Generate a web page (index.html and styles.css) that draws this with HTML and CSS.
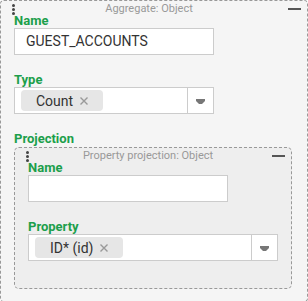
FILE: index.html
```html
<!DOCTYPE html>
<html>
<head>
    <title>Aggregate</title>
    <link rel="stylesheet" href="styles.css">
</head>
<body>
    <div class="box box-outer">
        <div class="box-head">
            <div class="handle"><span></span><span></span><span></span></div>
            <div class="box-title">Aggregate: Object</div>
            <div class="minimize"><span></span></div>
        </div>

        <div class="field">
            <div class="label">Name</div>
            <div class="input">GUEST_ACCOUNTS</div>
        </div>

        <div class="field">
            <div class="label">Type</div>
            <div class="select">
                <div class="select-value">
                    <span class="chip">Count
                        <svg class="chip-x" width="8" height="8" viewBox="0 0 8 8"><path d="M0.5 0.5L7.5 7.5M7.5 0.5L0.5 7.5"/></svg>
                    </span>
                </div>
                <div class="select-arrow">
                    <svg width="9" height="6" viewBox="0 0 9 6"><path d="M0 0H9V2L6 5H3L0 2Z"/></svg>
                </div>
            </div>
        </div>

        <div class="label label-box">Projection</div>
        <div class="box box-inner">
            <div class="box-head">
                <div class="handle"><span></span><span></span><span></span></div>
                <div class="box-title">Property projection: Object</div>
                <div class="minimize"><span></span></div>
            </div>

            <div class="field">
                <div class="label">Name</div>
                <div class="input"></div>
            </div>

            <div class="field">
                <div class="label">Property</div>
                <div class="select select-full">
                    <div class="select-value">
                        <span class="chip">ID* (id)
                            <svg class="chip-x" width="8" height="8" viewBox="0 0 8 8"><path d="M0.5 0.5L7.5 7.5M7.5 0.5L0.5 7.5"/></svg>
                        </span>
                    </div>
                    <div class="select-arrow">
                        <svg width="9" height="6" viewBox="0 0 9 6"><path d="M0 0H9V2L6 5H3L0 2Z"/></svg>
                    </div>
                </div>
            </div>
        </div>
    </div>
</body>
</html>
```

FILE: styles.css
```css
body {
    margin: 0;
    font-family: Roboto, "Liberation Sans", Arial, sans-serif;
    color: #333;
}
.box {
    border: 1px dashed #999;
    border-radius: 4px;
    padding: 0 13px;
}
.box-outer {
    background: #f5f5f5;
    padding-bottom: 12px;
}
.box-inner {
    background: #eeeeee;
    border-radius: 5px;
    margin-right: 2px;
    padding-bottom: 10px;
}
.box-head {
    display: flex;
    align-items: flex-start;
    height: 12px;
    margin-right: -7px;
}
.handle {
    display: flex;
    flex-direction: column;
    gap: 1px;
    margin: 3px 0 0 -2px;
}
.handle span {
    width: 3px;
    height: 3px;
    border-radius: 50%;
    background: #444;
}
.box-title {
    flex: 1;
    text-align: center;
    font-size: 11px;
    line-height: 12px;
    margin-top: 2px;
    color: #999;
}
.minimize {
    width: 18px;
    display: flex;
    justify-content: flex-end;
    padding-top: 7px;
}
.minimize span {
    width: 13px;
    height: 2px;
    background: #555;
}
.field {
    margin-bottom: 17px;
}
.label {
    font-size: 13px;
    line-height: 15px;
    font-weight: bold;
    color: #1c9f4b;
}
.label-box {
    margin-bottom: 1px;
}
.input {
    box-sizing: border-box;
    width: 200px;
    height: 27px;
    border: 1px solid #ccc;
    background: #fff;
    padding-left: 11px;
    font-size: 14px;
    line-height: 25px;
    color: #333;
}
.select {
    box-sizing: border-box;
    display: flex;
    width: 200px;
    height: 27px;
    border: 1px solid #ccc;
    background: #fff;
}
.select-full {
    width: 100%;
}
.select-value {
    flex: 1;
    display: flex;
    align-items: center;
    padding-left: 6px;
}
.chip {
    display: inline-flex;
    align-items: center;
    gap: 7px;
    height: 21px;
    padding: 0 15px;
    border-radius: 4px;
    background: #e6e6e6;
    font-size: 14px;
    color: #333;
}
.chip-x path {
    stroke: #999;
    stroke-width: 1.4;
}
.select-arrow {
    width: 25px;
    border-left: 1px solid #ccc;
    display: flex;
    align-items: center;
    justify-content: center;
}
.select-arrow svg {
    margin-top: 2px;
}
.select-arrow path {
    fill: #777;
}
```
